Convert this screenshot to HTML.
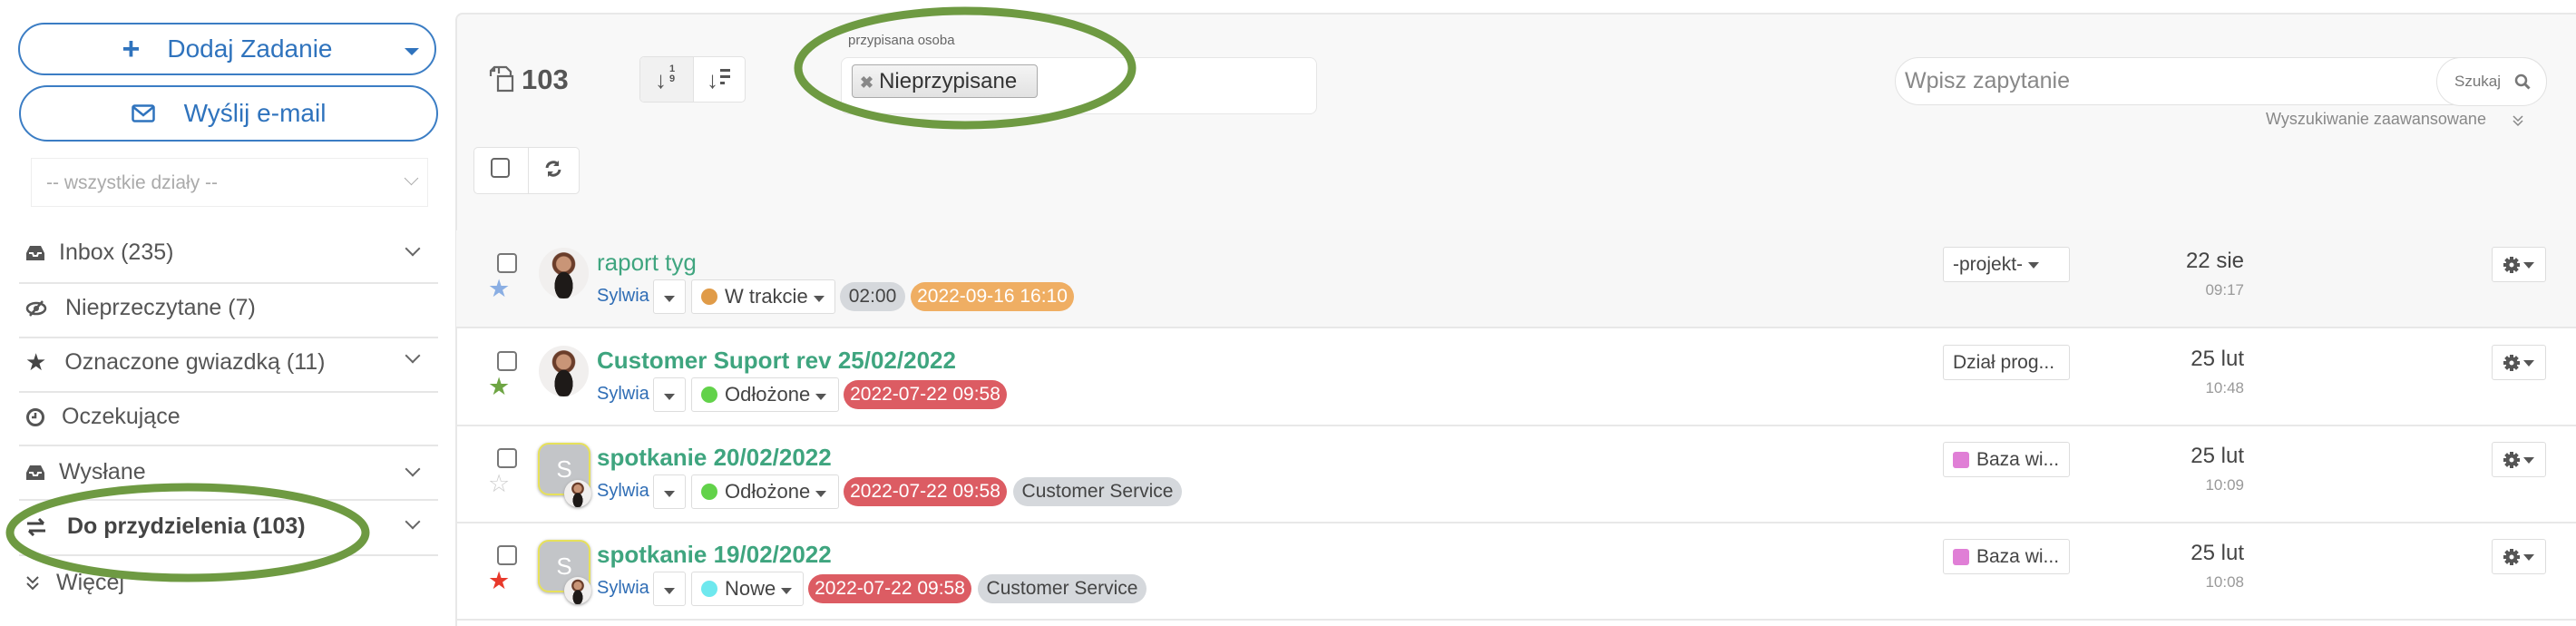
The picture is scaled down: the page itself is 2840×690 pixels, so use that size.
<!DOCTYPE html>
<html><head><meta charset="utf-8"><style>
*{box-sizing:border-box;margin:0;padding:0}
body{width:2840px;height:690px;overflow:hidden;background:#fff;font-family:"Liberation Sans",sans-serif;position:relative;color:#555}
.a{position:absolute}
.btn{position:absolute;border:2px solid #3b7dc4;border-radius:32px;color:#2f73bd;font-size:28px;display:flex;align-items:center;justify-content:center;background:#fff}
.sep{position:absolute;left:21px;width:462px;height:2px;background:#e6e6e6}
.mi{position:absolute;left:28px;font-size:25px;color:#555;display:flex;align-items:center}
.chev{position:absolute;left:449px;width:12px;height:12px;border-right:2px solid #666;border-bottom:2px solid #666;transform:rotate(45deg)}
.row{position:absolute;left:503px;right:0;height:108px;border-bottom:2px solid #e8e8e8}
.cb{position:absolute;width:22px;height:22px;border:2px solid #777;border-radius:4px;background:#fff}
.title{position:absolute;left:155px;font-size:26px;color:#3fa57f;font-weight:bold;white-space:nowrap}
.syl{position:absolute;left:155px;top:61px;font-size:20px;color:#2f6db5}
.dd{position:absolute;left:217px;top:54px;width:36px;height:38px;border:1px solid #ddd;border-radius:3px;background:#fff}
.car{position:absolute;width:0;height:0;border-left:6px solid transparent;border-right:6px solid transparent;border-top:7px solid #555}
.st{position:absolute;left:259px;top:54px;height:38px;border:1px solid #ddd;border-radius:3px;background:#fff;font-size:22px;color:#444;display:flex;align-items:center;padding-left:10px}
.dot{width:18px;height:18px;border-radius:50%;margin-right:8px}
.bd{position:absolute;top:57px;height:32px;border-radius:16px;font-size:21px;display:flex;align-items:center;justify-content:center;white-space:nowrap}
.proj{position:absolute;left:1639px;top:18px;width:140px;height:39px;border:1px solid #ddd;border-radius:3px;background:#fff;font-size:21px;color:#444;display:flex;align-items:center;padding-left:10px}
.dt{position:absolute;right:366px;top:20px;font-size:24px;color:#444;text-align:right}
.tm{position:absolute;right:366px;top:56px;font-size:17px;color:#999}
.gear{position:absolute;left:2244px;top:18px;width:60px;height:39px;border:1px solid #ddd;border-radius:3px;background:#fff}
.ph{position:absolute;border-radius:50%;background:radial-gradient(ellipse 30% 45% at 50% 75%,#1e1a18 60%,transparent 62%),radial-gradient(circle at 50% 32%,#c99577 0 17%,#6a3d2a 19% 26%,transparent 28%),#f1efee}
.sq{position:absolute;left:90px;top:19px;width:58px;height:58px;border-radius:12px;background:#c3c5c8;border:2px solid #e7e15a;color:#fff;font-size:26px;display:flex;align-items:center;justify-content:center;box-shadow:0 1px 3px #aaa}
</style></head><body>
<!-- sidebar -->
<div class="btn" style="left:20px;top:25px;width:461px;height:58px"><span style="font-size:34px;font-weight:bold;margin-right:30px">+</span>Dodaj Zadanie<span class="car" style="left:424px;top:26px;border-top-color:#2f73bd;border-width:8px 8px 0 8px"></span></div>
<div class="btn" style="left:21px;top:94px;width:462px;height:62px"><svg width="26" height="20" viewBox="0 0 26 20" style="margin-right:32px"><rect x="1.5" y="1.5" width="23" height="17" rx="2" fill="none" stroke="#2f73bd" stroke-width="2.5"/><path d="M2 3l11 9 11-9" fill="none" stroke="#2f73bd" stroke-width="2.5"/></svg>Wyślij e-mail</div>
<div class="a" style="left:34px;top:174px;width:438px;height:54px;border:1px solid #eee;background:#fff;font-size:21px;color:#aaa;padding:15px 16px">-- wszystkie działy --</div>
<div class="chev" style="top:191px;left:448px;border-color:#aaa;width:11px;height:11px;border-width:0 1.5px 1.5px 0"></div>
<div class="mi" style="top:264px"><svg width="22" height="18"><path d="M1 9l4-8h12l4 8v8H1z" fill="#555"/><path d="M4 9h4l1 3h4l1-3h4" fill="none" stroke="#fff" stroke-width="2"/></svg><span style="margin-left:15px">Inbox (235)</span></div><div class="chev" style="top:268px"></div>
<div class="sep" style="top:311px"></div>
<div class="mi" style="top:325px"><svg width="24" height="18"><ellipse cx="12" cy="9" rx="10" ry="6" fill="none" stroke="#555" stroke-width="2.5"/><circle cx="12" cy="9" r="3" fill="#555"/><path d="M5 17L19 1" stroke="#555" stroke-width="2.5"/></svg><span style="margin-left:20px">Nieprzeczytane (7)</span></div>
<div class="sep" style="top:371px"></div>
<div class="mi" style="top:384px"><span style="font-size:26px;color:#444">★</span><span style="margin-left:20px">Oznaczone gwiazdką (11)</span></div><div class="chev" style="top:386px"></div>
<div class="sep" style="top:431px"></div>
<div class="mi" style="top:445px"><svg width="22" height="22"><circle cx="11" cy="11" r="8.5" fill="none" stroke="#555" stroke-width="3"/><path d="M11 6v5h-4" fill="none" stroke="#555" stroke-width="2.5"/></svg><span style="margin-left:18px">Oczekujące</span></div>
<div class="sep" style="top:490px"></div>
<div class="mi" style="top:506px"><svg width="22" height="18"><path d="M1 9l4-8h12l4 8v8H1z" fill="#555"/><path d="M4 9h4l1 3h4l1-3h4" fill="none" stroke="#fff" stroke-width="2"/></svg><span style="margin-left:15px">Wysłane</span></div><div class="chev" style="top:511px"></div>
<div class="sep" style="top:550px"></div>
<div class="mi" style="top:566px"><svg width="24" height="20"><path d="M2 6h18M15 1l5 5M22 14H4M9 19l-5-5" fill="none" stroke="#444" stroke-width="3"/></svg><span style="margin-left:22px;font-weight:bold;color:#444">Do przydzielenia (103)</span></div><div class="chev" style="top:569px"></div>
<div class="sep" style="top:611px"></div>
<div class="mi" style="top:628px"><svg width="16" height="18"><path d="M2 2l6 6 6-6M2 9l6 6 6-6" fill="none" stroke="#555" stroke-width="2"/></svg><span style="margin-left:18px">Więcej</span></div>

<!-- main header -->
<div class="a" style="left:502px;top:14px;right:0;height:240px;background:#f8f8f8;border-top:2px solid #e8e8e8;border-left:2px solid #e8e8e8;border-top-left-radius:8px"></div>
<div class="a" style="left:502px;top:254px;width:2px;height:436px;background:#e8e8e8"></div>
<svg class="a" style="left:538px;top:72px" width="30" height="30"><path d="M12 9V2h8l5 5v5M3 12V6l4-4h7M3 6h4V2" fill="none" stroke="#666" stroke-width="2.2"/><path d="M11 12h9l7 0v16H11z" fill="none" stroke="#666" stroke-width="2.2"/></svg>
<div class="a" style="left:575px;top:70px;font-size:31px;font-weight:bold;color:#555">103</div>
<div class="a" style="left:705px;top:62px;width:117px;height:51px;border:1px solid #e2e2e2;border-radius:5px;background:#fff;overflow:hidden"><div style="width:59px;height:51px;background:#f1f1f1;border-right:1px solid #e2e2e2"></div></div>
<div class="a" style="left:722px;top:73px;font-size:26px;color:#555;font-weight:bold">↓</div><div class="a" style="left:738px;top:71px;font-size:11px;line-height:11px;color:#555;font-weight:bold">1<br>9</div>
<div class="a" style="left:779px;top:73px;font-size:26px;color:#555;font-weight:bold">↓</div><div class="a" style="left:794px;top:76px;width:11px;height:3px;background:#555;box-shadow:0 7px 0 -0px #555"></div><div class="a" style="left:794px;top:90px;width:5px;height:3px;background:#555"></div>
<div class="a" style="left:522px;top:162px;width:117px;height:52px;border:1px solid #e2e2e2;border-radius:5px;background:#fff"><div style="position:absolute;left:59px;top:0;width:1px;height:50px;background:#e2e2e2"></div></div>
<div class="cb" style="left:541px;top:174px;width:21px;height:22px;border-color:#666"></div>
<svg class="a" style="left:600px;top:176px" width="20" height="20"><path d="M3 9a7 7 0 0 1 12-4M17 11a7 7 0 0 1-12 4" fill="none" stroke="#555" stroke-width="3"/><path d="M16 1v6h-6zM4 19v-6h6z" fill="#555"/></svg>
<div class="a" style="left:935px;top:36px;font-size:15px;color:#666">przypisana osoba</div>
<div class="a" style="left:927px;top:63px;width:525px;height:63px;background:#fff;border:1px solid #e6e6e6;border-radius:8px"></div>
<div class="a" style="left:939px;top:71px;width:205px;height:37px;background:linear-gradient(#f4f4f4,#e2e2e2);border:1px solid #aaa;border-radius:4px;font-size:24px;color:#333;padding:4px 0 0 8px"><span style="color:#888;font-size:18px;font-weight:bold;margin-right:6px">✖</span>Nieprzypisane</div>
<div class="a" style="left:2089px;top:63px;width:719px;height:53px;background:#fff;border:1px solid #e2e2e2;border-radius:27px;font-size:25px;color:#888;padding:11px 0 0 10px">Wpisz zapytanie</div>
<div class="a" style="left:2686px;top:63px;width:122px;height:54px;border:1px solid #e2e2e2;border-radius:27px;background:#fff;font-size:17px;color:#777;padding:16px 0 0 19px">Szukaj</div>
<svg class="a" style="left:2772px;top:81px" width="18" height="18"><circle cx="7.5" cy="7.5" r="5.5" fill="none" stroke="#777" stroke-width="2.5"/><path d="M11.5 11.5l5 5" stroke="#777" stroke-width="3"/></svg>
<div class="a" style="left:2498px;top:121px;font-size:18px;color:#888">Wyszukiwanie zaawansowane</div>
<svg class="a" style="left:2770px;top:126px" width="12" height="14"><path d="M1 2l5 5 5-5M1 7l5 5 5-5" fill="none" stroke="#888" stroke-width="1.5"/></svg>

<!-- rows -->
<div class="row" style="top:254px;background:#f7f7f7">
 <div class="cb" style="left:45px;top:25px"></div><div class="a" style="left:35px;top:49px;font-size:27px;color:#8aaee3">★</div>
 <div class="ph" style="left:91px;top:19px;width:55px;height:56px"></div>
 <div class="title" style="top:20px;font-weight:normal">raport tyg</div>
 <div class="syl">Sylwia</div><div class="dd"><span class="car" style="left:11px;top:17px"></span></div>
 <div class="st" style="width:159px"><span class="dot" style="background:#e09b48"></span>W trakcie<span class="car" style="position:relative;margin-left:6px;top:2px"></span></div>
 <div class="bd" style="left:423px;width:72px;background:#d5d8dc;color:#444">02:00</div>
 <div class="bd" style="left:501px;width:180px;background:#efae63;color:#fff">2022-09-16 16:10</div>
 <div class="proj">-projekt-<span class="car" style="position:relative;margin-left:6px;top:1px"></span></div>
 <div class="dt">22 sie</div><div class="tm">09:17</div>
 <div class="gear"></div>
</div>
<div class="row" style="top:362px">
 <div class="cb" style="left:45px;top:25px"></div><div class="a" style="left:35px;top:49px;font-size:27px;color:#6ea544">★</div>
 <div class="ph" style="left:91px;top:19px;width:55px;height:56px"></div>
 <div class="title" style="top:20px">Customer Suport rev 25/02/2022</div>
 <div class="syl">Sylwia</div><div class="dd"><span class="car" style="left:11px;top:17px"></span></div>
 <div class="st" style="width:163px"><span class="dot" style="background:#62d24a"></span>Odłożone<span class="car" style="position:relative;margin-left:6px;top:2px"></span></div>
 <div class="bd" style="left:427px;width:180px;background:#dc5c63;color:#fff">2022-07-22 09:58</div>
 <div class="proj">Dział prog...</div>
 <div class="dt">25 lut</div><div class="tm">10:48</div>
 <div class="gear"></div>
</div>
<div class="row" style="top:469px">
 <div class="cb" style="left:45px;top:25px"></div><div class="a" style="left:35px;top:49px;font-size:27px;color:#ccc">☆</div>
 <div class="sq">S</div><div class="ph" style="left:119px;top:60px;width:30px;height:30px;box-shadow:0 1px 3px #999"></div>
 <div class="title" style="top:20px">spotkanie 20/02/2022</div>
 <div class="syl">Sylwia</div><div class="dd"><span class="car" style="left:11px;top:17px"></span></div>
 <div class="st" style="width:163px"><span class="dot" style="background:#62d24a"></span>Odłożone<span class="car" style="position:relative;margin-left:6px;top:2px"></span></div>
 <div class="bd" style="left:427px;width:180px;background:#dc5c63;color:#fff">2022-07-22 09:58</div>
 <div class="bd" style="left:614px;width:186px;background:#d5d8dc;color:#444">Customer Service</div>
 <div class="proj"><span style="width:18px;height:18px;background:#e07fd6;border-radius:3px;margin-right:8px"></span>Baza wi...</div>
 <div class="dt">25 lut</div><div class="tm">10:09</div>
 <div class="gear"></div>
</div>
<div class="row" style="top:576px">
 <div class="cb" style="left:45px;top:25px"></div><div class="a" style="left:35px;top:49px;font-size:27px;color:#e8392b">★</div>
 <div class="sq">S</div><div class="ph" style="left:119px;top:60px;width:30px;height:30px;box-shadow:0 1px 3px #999"></div>
 <div class="title" style="top:20px">spotkanie 19/02/2022</div>
 <div class="syl">Sylwia</div><div class="dd"><span class="car" style="left:11px;top:17px"></span></div>
 <div class="st" style="width:124px"><span class="dot" style="background:#6ee8ee"></span>Nowe<span class="car" style="position:relative;margin-left:6px;top:2px"></span></div>
 <div class="bd" style="left:388px;width:180px;background:#dc5c63;color:#fff">2022-07-22 09:58</div>
 <div class="bd" style="left:575px;width:186px;background:#d5d8dc;color:#444">Customer Service</div>
 <div class="proj"><span style="width:18px;height:18px;background:#e07fd6;border-radius:3px;margin-right:8px"></span>Baza wi...</div>
 <div class="dt">25 lut</div><div class="tm">10:08</div>
 <div class="gear"></div>
</div>
<!-- gears -->
<svg width="0" height="0" style="position:absolute"><defs><g id="g"><circle cx="10" cy="10" r="6.5" fill="#555"/><path d="M10 1v18M1 10h18M3.6 3.6l12.8 12.8M16.4 3.6L3.6 16.4" stroke="#555" stroke-width="4"/><circle cx="10" cy="10" r="2.5" fill="#fff"/><path d="M23 7h12l-6 7z" fill="#555"/></g></defs></svg>
<svg class="a" style="left:2759px;top:282px" width="36" height="20"><use href="#g"/></svg>
<svg class="a" style="left:2759px;top:390px" width="36" height="20"><use href="#g"/></svg>
<svg class="a" style="left:2759px;top:497px" width="36" height="20"><use href="#g"/></svg>
<svg class="a" style="left:2759px;top:604px" width="36" height="20"><use href="#g"/></svg>
<!-- ellipses -->
<svg class="a" style="left:0;top:0" width="2840" height="690"><ellipse cx="1064" cy="75" rx="184" ry="63" fill="none" stroke="#6e9a42" stroke-width="9"/><ellipse cx="207" cy="587" rx="196" ry="50" fill="none" stroke="#6e9a42" stroke-width="9"/></svg>
</body></html>
